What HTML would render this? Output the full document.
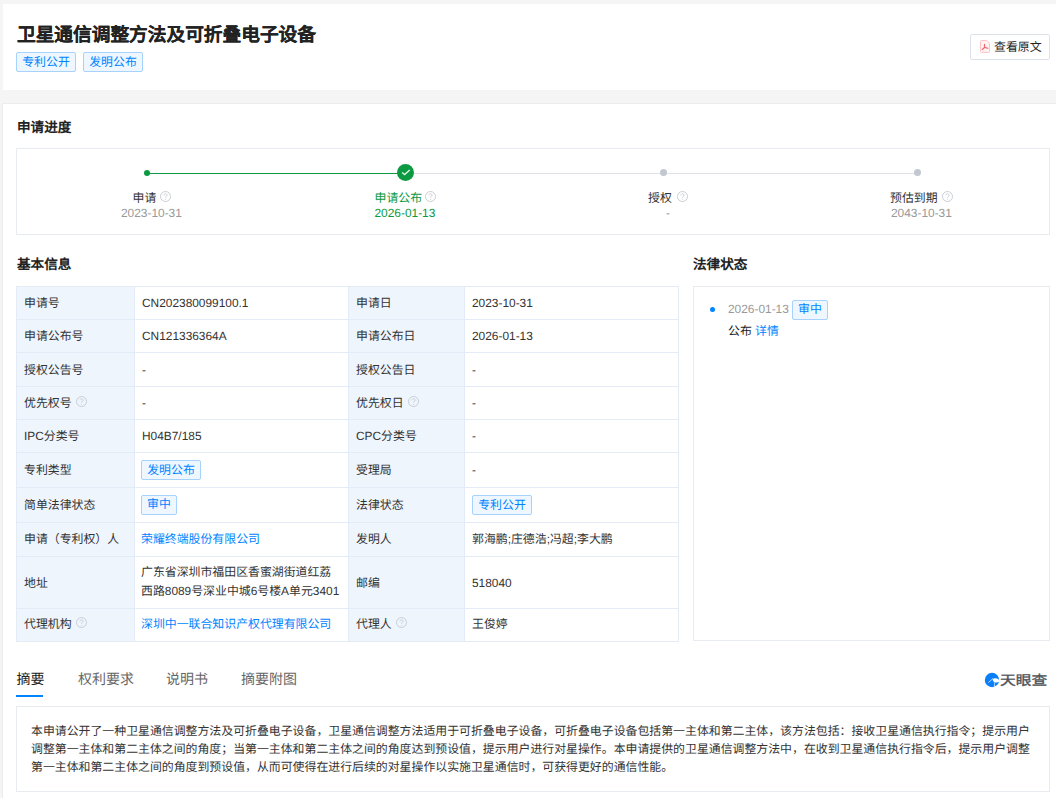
<!DOCTYPE html>
<html lang="zh-CN">
<head>
<meta charset="utf-8">
<style>
html,body{margin:0;padding:0;}
body{text-rendering:geometricPrecision;width:1056px;height:798px;overflow:hidden;background:#f5f5f5;font-family:"Liberation Sans",sans-serif;font-size:11.9px;color:#333;position:relative;}
.abs{position:absolute;}
.card{position:absolute;background:#fff;}
.tag{position:absolute;box-sizing:border-box;height:20px;line-height:18px;border:1px solid #a6d2fb;background:#eef7ff;color:#0084ff;border-radius:2px;font-size:11.9px;text-align:center;white-space:nowrap;}
.tag span{position:relative;top:-0.5px;}
.h{position:absolute;font-size:13.6px;font-weight:bold;color:#222;line-height:16px;white-space:nowrap;}
.t{position:absolute;white-space:nowrap;line-height:16px;}
.hl{position:absolute;height:1px;background:#e2ebf6;}
.vl{position:absolute;width:1px;background:#e2ebf6;}
.lbg{position:absolute;background:#eef5fd;}
.box{position:absolute;border:1px solid #e8ecf1;box-sizing:border-box;}
.cell{position:absolute;display:flex;align-items:center;line-height:18px;color:#333;white-space:nowrap;}
.cj{position:relative;top:1px;}

.qs{display:inline-block;position:relative;width:11px;height:11px;margin-left:4px;vertical-align:top;top:-2px;}
.ttag{display:inline-block;box-sizing:border-box;height:20px;line-height:18px;border:1px solid #a6d2fb;background:#eef7ff;color:#0084ff;border-radius:2px;text-align:center;}
.ttag span{position:relative;top:-0.5px;}
</style>
</head>
<body>
<div class="card" style="left:3px;top:4px;width:1053px;height:86px;"></div>
<div class="abs" style="left:17px;top:22.5px;font-size:18.7px;font-weight:bold;color:#222;line-height:24px;white-space:nowrap;-webkit-text-stroke:0.1px #222;">卫星通信调整方法及可折叠电子设备</div>
<div class="tag" style="left:16px;top:52px;width:60px;"><span>专利公开</span></div>
<div class="tag" style="left:83px;top:52px;width:60px;"><span>发明公布</span></div>
<div class="box" style="left:970px;top:34px;width:80px;height:26px;border-color:#dde2ea;border-radius:2px;"></div>
<svg class="abs" style="left:979px;top:39px" width="12" height="14" viewBox="0 0 12 14">
<path d="M2.5 1.5h5.2l2.8 2.8v8.2a1 1 0 0 1-1 1h-7a1 1 0 0 1-1-1v-10a1 1 0 0 1 1-1z" fill="#fff2f2" stroke="#fcc4c6" stroke-width="1"/>
<path d="M5.5 5.2v3.2l-2.2 2.1M5.6 8.4l3.2 0.9" fill="none" stroke="#f0656d" stroke-width="1.15" stroke-linecap="round"/>
</svg>
<div class="t" style="left:994px;top:37.5px;color:#222;font-size:11.9px;"><span class="cj">查看原文</span></div>
<div class="card" style="left:2px;top:103px;width:1054px;height:695px;box-sizing:border-box;border-top:1px solid #ececec;border-left:1px solid #ececec;"></div>
<div class="h" style="left:17px;top:119px;"><span class="cj">申请进度</span></div>
<div class="box" style="left:16px;top:148px;width:1034px;height:87px;"></div>
<div class="abs" style="left:147px;top:172.5px;width:252px;height:1.5px;background:#0b9a42;"></div>
<div class="abs" style="left:412px;top:172.5px;width:505px;height:1.5px;background:#dfe2ea;"></div>
<div class="abs" style="left:144px;top:169.5px;width:6px;height:6px;border-radius:50%;background:#0b9a42;"></div>
<div class="abs" style="left:397px;top:164px;width:17px;height:17px;border-radius:50%;background:#0b9a42;"></div>
<svg class="abs" style="left:397px;top:164px" width="17" height="17" viewBox="0 0 17 17"><path d="M5.1 8.5l2.5 2 5.1-4.5" fill="none" stroke="#e3f3e9" stroke-width="1.35"/></svg>
<div class="abs" style="left:660px;top:169px;width:7px;height:7px;border-radius:50%;background:#c3c7cf;"></div>
<div class="abs" style="left:914px;top:169px;width:7px;height:7px;border-radius:50%;background:#c3c7cf;"></div>
<div class="t" style="left:132.5px;top:188.5px;color:#333;font-size:11.9px;"><span class="cj">申请</span></div>
<svg class="abs" style="left:159.5px;top:191px" width="11" height="11" viewBox="0 0 11 11"><circle cx="5.5" cy="5.5" r="5" fill="none" stroke="#c9cdd4" stroke-width="1"/><path d="M3.9 4.3c0-1 .7-1.6 1.6-1.6s1.6.6 1.6 1.4c0 .8-.6 1.1-1.1 1.4-.4.3-.5.5-.5 1v.4" fill="none" stroke="#c9cdd4" stroke-width="0.9"/><circle cx="5.5" cy="8.3" r=".55" fill="#c9cdd4"/></svg>
<div class="t" style="left:121px;top:205px;color:#999;font-size:11.9px;">2023-10-31</div>
<div class="t" style="left:374.5px;top:188.5px;color:#0b9a42;font-size:11.9px;"><span class="cj">申请公布</span></div>
<svg class="abs" style="left:425px;top:191px" width="11" height="11" viewBox="0 0 11 11"><circle cx="5.5" cy="5.5" r="5" fill="none" stroke="#c9cdd4" stroke-width="1"/><path d="M3.9 4.3c0-1 .7-1.6 1.6-1.6s1.6.6 1.6 1.4c0 .8-.6 1.1-1.1 1.4-.4.3-.5.5-.5 1v.4" fill="none" stroke="#c9cdd4" stroke-width="0.9"/><circle cx="5.5" cy="8.3" r=".55" fill="#c9cdd4"/></svg>
<div class="t" style="left:374.5px;top:205px;color:#0b9a42;font-size:11.9px;">2026-01-13</div>
<div class="t" style="left:648px;top:188.5px;color:#333;font-size:11.9px;"><span class="cj">授权</span></div>
<svg class="abs" style="left:676.5px;top:191px" width="11" height="11" viewBox="0 0 11 11"><circle cx="5.5" cy="5.5" r="5" fill="none" stroke="#c9cdd4" stroke-width="1"/><path d="M3.9 4.3c0-1 .7-1.6 1.6-1.6s1.6.6 1.6 1.4c0 .8-.6 1.1-1.1 1.4-.4.3-.5.5-.5 1v.4" fill="none" stroke="#c9cdd4" stroke-width="0.9"/><circle cx="5.5" cy="8.3" r=".55" fill="#c9cdd4"/></svg>
<div class="t" style="left:666px;top:205px;color:#999;font-size:11.9px;">-</div>
<div class="t" style="left:890px;top:188.5px;color:#333;font-size:11.9px;"><span class="cj">预估到期</span></div>
<svg class="abs" style="left:941.5px;top:191px" width="11" height="11" viewBox="0 0 11 11"><circle cx="5.5" cy="5.5" r="5" fill="none" stroke="#c9cdd4" stroke-width="1"/><path d="M3.9 4.3c0-1 .7-1.6 1.6-1.6s1.6.6 1.6 1.4c0 .8-.6 1.1-1.1 1.4-.4.3-.5.5-.5 1v.4" fill="none" stroke="#c9cdd4" stroke-width="0.9"/><circle cx="5.5" cy="8.3" r=".55" fill="#c9cdd4"/></svg>
<div class="t" style="left:891px;top:205px;color:#999;font-size:11.9px;">2043-10-31</div>
<div class="h" style="left:17px;top:255.5px;"><span class="cj">基本信息</span></div>
<div class="h" style="left:693px;top:255.5px;"><span class="cj">法律状态</span></div>
<div class="lbg" style="left:16px;top:286px;width:118px;height:355px"></div>
<div class="lbg" style="left:348px;top:286px;width:116px;height:355px"></div>
<div class="hl" style="left:16px;top:286px;width:663px"></div>
<div class="hl" style="left:16px;top:319px;width:663px"></div>
<div class="hl" style="left:16px;top:352px;width:663px"></div>
<div class="hl" style="left:16px;top:386px;width:663px"></div>
<div class="hl" style="left:16px;top:419px;width:663px"></div>
<div class="hl" style="left:16px;top:452px;width:663px"></div>
<div class="hl" style="left:16px;top:487px;width:663px"></div>
<div class="hl" style="left:16px;top:522px;width:663px"></div>
<div class="hl" style="left:16px;top:556px;width:663px"></div>
<div class="hl" style="left:16px;top:608px;width:663px"></div>
<div class="hl" style="left:16px;top:641px;width:663px"></div>
<div class="vl" style="left:16px;top:286px;height:356px"></div>
<div class="vl" style="left:134px;top:286px;height:356px"></div>
<div class="vl" style="left:348px;top:286px;height:356px"></div>
<div class="vl" style="left:464px;top:286px;height:356px"></div>
<div class="vl" style="left:678px;top:286px;height:356px"></div>
<div class="cell" style="left:24px;top:287px;width:109px;height:32px"><span>申请号</span></div>
<div class="cell" style="left:142px;top:287px;width:205px;height:32px">CN202380099100.1</div>
<div class="cell" style="left:356px;top:287px;width:107px;height:32px"><span>申请日</span></div>
<div class="cell" style="left:472px;top:287px;width:205px;height:32px">2023-10-31</div>
<div class="cell" style="left:24px;top:320px;width:109px;height:32px"><span>申请公布号</span></div>
<div class="cell" style="left:142px;top:320px;width:205px;height:32px">CN121336364A</div>
<div class="cell" style="left:356px;top:320px;width:107px;height:32px"><span>申请公布日</span></div>
<div class="cell" style="left:472px;top:320px;width:205px;height:32px">2026-01-13</div>
<div class="cell" style="left:24px;top:353px;width:109px;height:33px"><span>授权公告号</span></div>
<div class="cell" style="left:142px;top:353px;width:205px;height:33px">-</div>
<div class="cell" style="left:356px;top:353px;width:107px;height:33px"><span>授权公告日</span></div>
<div class="cell" style="left:472px;top:353px;width:205px;height:33px">-</div>
<div class="cell" style="left:24px;top:387px;width:109px;height:32px"><span>优先权号</span><span class="qs"><svg width="11" height="11" viewBox="0 0 11 11" style="display:block"><circle cx="5.5" cy="5.5" r="5" fill="none" stroke="#c9cdd4" stroke-width="1"/><path d="M3.9 4.3c0-1 .7-1.6 1.6-1.6s1.6.6 1.6 1.4c0 .8-.6 1.1-1.1 1.4-.4.3-.5.5-.5 1v.4" fill="none" stroke="#c9cdd4" stroke-width="0.9"/><circle cx="5.5" cy="8.3" r=".55" fill="#c9cdd4"/></svg></span></div>
<div class="cell" style="left:142px;top:387px;width:205px;height:32px">-</div>
<div class="cell" style="left:356px;top:387px;width:107px;height:32px"><span>优先权日</span><span class="qs"><svg width="11" height="11" viewBox="0 0 11 11" style="display:block"><circle cx="5.5" cy="5.5" r="5" fill="none" stroke="#c9cdd4" stroke-width="1"/><path d="M3.9 4.3c0-1 .7-1.6 1.6-1.6s1.6.6 1.6 1.4c0 .8-.6 1.1-1.1 1.4-.4.3-.5.5-.5 1v.4" fill="none" stroke="#c9cdd4" stroke-width="0.9"/><circle cx="5.5" cy="8.3" r=".55" fill="#c9cdd4"/></svg></span></div>
<div class="cell" style="left:472px;top:387px;width:205px;height:32px">-</div>
<div class="cell" style="left:24px;top:420px;width:109px;height:32px">IPC<span>分类号</span></div>
<div class="cell" style="left:142px;top:420px;width:205px;height:32px">H04B7/185</div>
<div class="cell" style="left:356px;top:420px;width:107px;height:32px">CPC<span>分类号</span></div>
<div class="cell" style="left:472px;top:420px;width:205px;height:32px">-</div>
<div class="cell" style="left:24px;top:453px;width:109px;height:34px"><span>专利类型</span></div>
<div class="cell" style="left:142px;top:453px;width:205px;height:34px"><span class="ttag" style="width:60px;position:relative;left:-1px;top:0px"><span>发明公布</span></span></div>
<div class="cell" style="left:356px;top:453px;width:107px;height:34px"><span>受理局</span></div>
<div class="cell" style="left:472px;top:453px;width:205px;height:34px">-</div>
<div class="cell" style="left:24px;top:487.5px;width:109px;height:34px"><span>简单法律状态</span></div>
<div class="cell" style="left:142px;top:487.5px;width:205px;height:34px"><span class="ttag" style="width:36px;position:relative;left:-1px;top:0px"><span>审中</span></span></div>
<div class="cell" style="left:356px;top:487.5px;width:107px;height:34px"><span>法律状态</span></div>
<div class="cell" style="left:472px;top:487.5px;width:205px;height:34px"><span class="ttag" style="width:60px;position:relative;left:0px;top:0.5px"><span>专利公开</span></span></div>
<div class="cell" style="left:24px;top:522px;width:109px;height:33px"><span>申请（专利权）人</span></div>
<div class="cell" style="left:142px;top:522px;width:205px;height:33px"><span style="color:#0084ff;position:relative;left:-1px">荣耀终端股份有限公司</span></div>
<div class="cell" style="left:356px;top:522px;width:107px;height:33px"><span>发明人</span></div>
<div class="cell" style="left:472px;top:522px;width:205px;height:33px"><span>郭海鹏;庄德浩;冯超;李大鹏</span></div>
<div class="cell" style="left:24px;top:557px;width:109px;height:51px"><span>地址</span></div>
<div class="cell" style="left:142px;top:557px;width:205px;height:51px"><span style="display:block;line-height:19px;position:relative;top:-0.5px;left:-1px">广东省深圳市福田区香蜜湖街道红荔<br>西路8089号深业中城6号楼A单元3401</span></div>
<div class="cell" style="left:356px;top:557px;width:107px;height:51px"><span>邮编</span></div>
<div class="cell" style="left:472px;top:557px;width:205px;height:51px">518040</div>
<div class="cell" style="left:24px;top:608px;width:109px;height:32px"><span>代理机构</span><span class="qs"><svg width="11" height="11" viewBox="0 0 11 11" style="display:block"><circle cx="5.5" cy="5.5" r="5" fill="none" stroke="#c9cdd4" stroke-width="1"/><path d="M3.9 4.3c0-1 .7-1.6 1.6-1.6s1.6.6 1.6 1.4c0 .8-.6 1.1-1.1 1.4-.4.3-.5.5-.5 1v.4" fill="none" stroke="#c9cdd4" stroke-width="0.9"/><circle cx="5.5" cy="8.3" r=".55" fill="#c9cdd4"/></svg></span></div>
<div class="cell" style="left:142px;top:608px;width:205px;height:32px"><span style="color:#0084ff;position:relative;left:-1px">深圳中一联合知识产权代理有限公司</span></div>
<div class="cell" style="left:356px;top:608px;width:107px;height:32px"><span>代理人</span><span class="qs"><svg width="11" height="11" viewBox="0 0 11 11" style="display:block"><circle cx="5.5" cy="5.5" r="5" fill="none" stroke="#c9cdd4" stroke-width="1"/><path d="M3.9 4.3c0-1 .7-1.6 1.6-1.6s1.6.6 1.6 1.4c0 .8-.6 1.1-1.1 1.4-.4.3-.5.5-.5 1v.4" fill="none" stroke="#c9cdd4" stroke-width="0.9"/><circle cx="5.5" cy="8.3" r=".55" fill="#c9cdd4"/></svg></span></div>
<div class="cell" style="left:472px;top:608px;width:205px;height:32px"><span>王俊婷</span></div>
<div class="box" style="left:693px;top:286px;width:357px;height:355px;"></div>
<div class="abs" style="left:710px;top:307px;width:5px;height:5px;border-radius:50%;background:#0084ff;"></div>
<div class="t" style="left:728px;top:301px;color:#999;font-size:11.9px;">2026-01-13</div>
<div class="tag" style="left:792px;top:300px;width:36px;"><span style="top:-1.5px">审中</span></div>
<div class="t" style="left:728px;top:322px;color:#222;font-size:11.9px;"><span class="cj">公布 <span style="color:#0084ff">详情</span></span></div>
<div class="t" style="left:16.4px;top:669px;color:#222;font-size:14px;line-height:18px;"><span class="cj">摘要</span></div>
<div class="t" style="left:78px;top:669px;color:#666;font-size:14px;line-height:18px;"><span class="cj">权利要求</span></div>
<div class="t" style="left:166px;top:669px;color:#666;font-size:14px;line-height:18px;"><span class="cj">说明书</span></div>
<div class="t" style="left:241px;top:669px;color:#666;font-size:14px;line-height:18px;"><span class="cj">摘要附图</span></div>
<div class="abs" style="left:16px;top:695px;width:27px;height:2px;background:#0084ff;"></div>
<svg class="abs" style="left:984px;top:672px" width="16" height="16" viewBox="0 0 16 16"><circle cx="8" cy="8" r="7.2" fill="#0a7ffa"/><path d="M8.6 7.6C10 5.6 13.4 5.6 15.6 8.4L15.6 9.4C14 10.2 12 10.9 10.4 10.3C9.4 9.8 8.8 8.8 8.6 7.6z" fill="#fff"/><path d="M4.3 10.6L9.2 6.3" stroke="#fff" stroke-width="0.7"/><path d="M10.3 10.5C10.9 12 10.7 13.6 10.1 15.4" stroke="#fff" stroke-width="0.7" fill="none"/></svg>
<div class="abs" style="left:1000px;top:671.5px;font-size:13.6px;line-height:18px;color:#50545a;white-space:nowrap;transform:scaleX(1.16);transform-origin:0 0;-webkit-text-stroke:0.35px #50545a;">天眼查</div>
<div class="box" style="left:16px;top:706px;width:1034px;height:86px;"></div>
<div class="abs cj" style="left:31px;top:721.5px;line-height:18.4px;color:#333;white-space:nowrap;font-size:11.9px">本申请公开了一种卫星通信调整方法及可折叠电子设备，卫星通信调整方法适用于可折叠电子设备，可折叠电子设备包括第一主体和第二主体，该方法包括：接收卫星通信执行指令；提示用户<br>调整第一主体和第二主体之间的角度；当第一主体和第二主体之间的角度达到预设值，提示用户进行对星操作。本申请提供的卫星通信调整方法中，在收到卫星通信执行指令后，提示用户调整<br>第一主体和第二主体之间的角度到预设值，从而可使得在进行后续的对星操作以实施卫星通信时，可获得更好的通信性能。</div>
</body>
</html>
